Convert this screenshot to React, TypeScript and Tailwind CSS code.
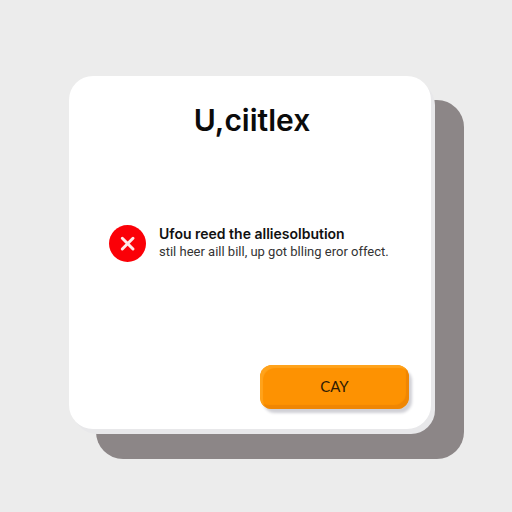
function ErrorIcon() {
  return (
    <svg className="size-[37px] shrink-0" viewBox="0 0 37 37" fill="none" role="img" aria-label="Error">
      <circle cx="18.5" cy="18.5" r="18.5" fill="#fb0007" />
      <path d="M13.300 13.300L24 24M24 13.300L13.300 24" stroke="#ffe9e9" strokeWidth="3" strokeLinecap="round" />
    </svg>
  );
}

export default function App() {
  return (
    <main className="flex min-h-screen items-center justify-center bg-[#ececec] pt-1 pr-7 pb-3 pl-4 font-['Inter',sans-serif] text-[#111111]">
      <section
        role="alertdialog"
        aria-labelledby="dialog-title"
        aria-describedby="dialog-message"
        className="flex w-full max-w-[362px] flex-col rounded-3xl bg-white px-[22px] pt-6 pb-5 shadow-[4px_5px_0_0_#e8e8ea,30px_27px_0_3px_#8c8687]"
      >
        <h1 id="dialog-title" className="pl-1 text-center text-[30px] leading-10 font-semibold text-[#0b0b0b]">
          U,ciitlex
        </h1>
        <div id="dialog-message" className="mt-[85px] flex items-center gap-[13px] pl-[18px]">
          <ErrorIcon />
          <div className="whitespace-nowrap">
            <p className="text-sm leading-[18px] font-semibold">Ufou reed the alliesolbution</p>
            <p className="font-[Roboto,sans-serif] text-[13px] leading-[18px] text-[#333333]">
              stil heer aill bill, up got blling eror offect.
            </p>
          </div>
        </div>
        <button
          type="button"
          className="mt-[103px] h-11 w-[149px] self-end rounded-xl bg-[#fd9202] font-[Lato,sans-serif] text-[15px] text-[#2e1a05] shadow-[inset_3px_3px_1px_#ffa31c,inset_-3px_-4px_1px_#ef8604,3px_4px_3px_#d0d0d6]"
        >
          CAY
        </button>
      </section>
    </main>
  );
}
